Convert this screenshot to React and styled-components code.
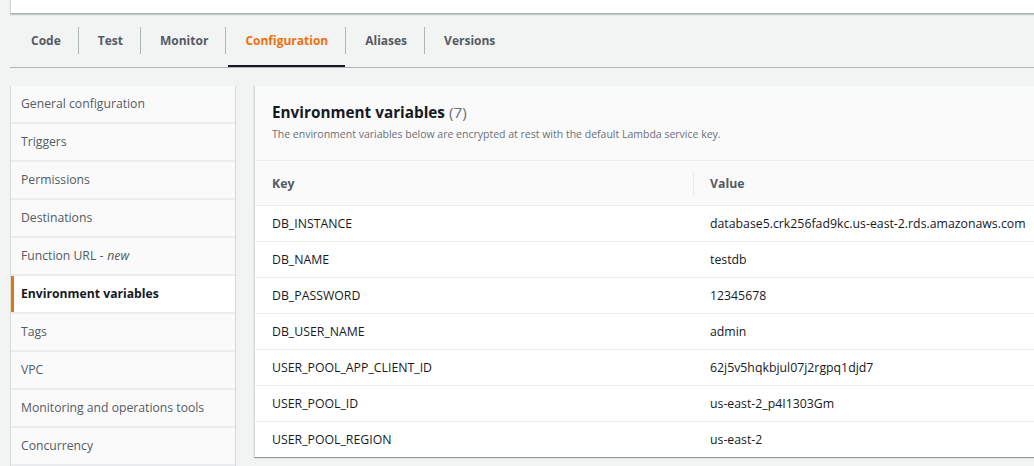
import React from "react";
import styled, { createGlobalStyle } from "styled-components";

const GlobalStyle = createGlobalStyle`
  body {
    margin: 0;
    background: #f2f3f3;
    font-family: "Open Sans", "Noto Sans", sans-serif;
    color: #16191f;
  }
`;

const Page = styled.div`
  width: 1034px;
  height: 466px;
  overflow: hidden;
  padding-left: 10px;
  box-sizing: border-box;
`;

const TopCard = styled.div`
  height: 13px;
  background: #fff;
  border-left: 1px solid #d5dbdb;
  border-bottom: 1px solid #aab7b8;
  box-shadow: 0 1px 1px rgba(0, 28, 36, 0.2);
`;

const TabBar = styled.div`
  display: flex;
  margin-top: 13px;
  height: 40px;
  border-bottom: 1px solid #aab7b8;
`;

const Tab = styled.div`
  position: relative;
  display: flex;
  align-items: flex-start;
  padding: 0 17px 0 ${(p) => (p.$first ? "21px" : "19px")};
  height: 40px;
  font-size: 12px;
  font-weight: 700;
  line-height: 27px;
  color: ${(p) => (p.$active ? "#ec7211" : "#545b64")};
  border-right: ${(p) => (p.$last ? "none" : "1px solid #aab7b8")};
  box-sizing: border-box;
  &::before {
    content: "";
    position: absolute;
    right: -1px;
    top: 27px;
    height: 13px;
    width: 1px;
    background: #f2f3f3;
    display: ${(p) => (p.$last ? "none" : "block")};
  }
  &::after {
    content: "";
    position: absolute;
    left: 2px;
    right: 0;
    bottom: 0;
    height: 2px;
    background: #16191f;
    display: ${(p) => (p.$active ? "block" : "none")};
  }
`;

const Body = styled.div`
  display: flex;
  gap: 18px;
  margin-top: 18px;
  align-items: flex-start;
`;

const SideNav = styled.div`
  width: 226px;
  flex-shrink: 0;
  display: flex;
  flex-direction: column;
  gap: 2px;
  padding-bottom: 2px;
  background: #eaeded;
  border-left: 1px solid #d5dbdb;
  border-right: 1px solid #d5dbdb;
  box-sizing: border-box;
`;

const NavItem = styled.div`
  height: 36px;
  display: flex;
  align-items: center;
  padding-left: ${(p) => (p.$active ? "7px" : "10px")};
  padding-bottom: 1px;
  box-sizing: border-box;
  font-size: 12.2px;
  background: ${(p) => (p.$active ? "#fff" : "#fafafa")};
  color: ${(p) => (p.$active ? "#16191f" : "#545b64")};
  font-weight: ${(p) => (p.$active ? 700 : 400)};
  border-left: ${(p) => (p.$active ? "3px solid #ec7211" : "none")};
  white-space: nowrap;
  em {
    margin-left: 4px;
  }
`;

const Panel = styled.div`
  flex: 1;
  min-width: 800px;
  background: #fff;
  border-left: 1px solid #d5dbdb;
  box-shadow: 0 1px 1px 0 rgba(0, 28, 36, 0.3), 1px 1px 1px 0 rgba(0, 28, 36, 0.15);
`;

const PanelHeader = styled.div`
  height: 75px;
  box-sizing: border-box;
  padding: 15px 0 0 17px;
  background: #fafafa;
  border-bottom: 1px solid #eaeded;
`;

const Title = styled.h2`
  margin: 0;
  font-size: 15.3px;
  line-height: 22px;
  font-weight: 700;
  color: #16191f;
  span {
    font-weight: 400;
    color: #687078;
  }
`;

const Desc = styled.p`
  margin: 3px 0 0;
  font-size: 10.5px;
  line-height: 16px;
  color: #687078;
`;

const Row = styled.div`
  display: grid;
  grid-template-columns: 438px 1fr;
  height: ${(p) => (p.$head ? "44px" : "35px")};
  align-items: center;
  background: ${(p) => (p.$head ? "#fafafa" : "#fff")};
  border-bottom: ${(p) => (p.$lastRow ? "none" : "1px solid #eaeded")};
  font-size: 12.3px;
  color: ${(p) => (p.$head ? "#545b64" : "#16191f")};
  font-weight: ${(p) => (p.$head ? 700 : 400)};
`;

const Cell = styled.div`
  padding-left: 17px;
  white-space: nowrap;
  height: 100%;
  display: flex;
  align-items: center;
  box-sizing: border-box;
`;

const HeadCell = styled(Cell)`
  position: relative;
  &::before {
    content: "";
    position: absolute;
    left: 0;
    top: 11px;
    bottom: 10px;
    width: 1px;
    background: #eaeded;
    display: ${(p) => (p.$sep ? "block" : "none")};
  }
`;

const tabs = ["Code", "Test", "Monitor", "Configuration", "Aliases", "Versions"];

const navItems = [
  "General configuration",
  "Triggers",
  "Permissions",
  "Destinations",
  "Function URL",
  "Environment variables",
  "Tags",
  "VPC",
  "Monitoring and operations tools",
  "Concurrency",
];

const vars = [
  ["DB_INSTANCE", "database5.crk256fad9kc.us-east-2.rds.amazonaws.com"],
  ["DB_NAME", "testdb"],
  ["DB_PASSWORD", "12345678"],
  ["DB_USER_NAME", "admin"],
  ["USER_POOL_APP_CLIENT_ID", "62j5v5hqkbjul07j2rgpq1djd7"],
  ["USER_POOL_ID", "us-east-2_p4I1303Gm"],
  ["USER_POOL_REGION", "us-east-2"],
];

export default function App() {
  return (
    <Page>
      <GlobalStyle />
      <TopCard />
      <TabBar>
        {tabs.map((t, i) => (
          <Tab
            key={t}
            $first={i === 0}
            $last={i === tabs.length - 1}
            $active={t === "Configuration"}
          >
            {t}
          </Tab>
        ))}
      </TabBar>
      <Body>
        <SideNav>
          {navItems.map((n) => (
            <NavItem key={n} $active={n === "Environment variables"}>
              {n === "Function URL" ? (
                <>
                  Function URL - <em>new</em>
                </>
              ) : (
                n
              )}
            </NavItem>
          ))}
        </SideNav>
        <Panel>
          <PanelHeader>
            <Title>
              Environment variables <span>(7)</span>
            </Title>
            <Desc>
              The environment variables below are encrypted at rest with the
              default Lambda service key.
            </Desc>
          </PanelHeader>
          <Row $head>
            <HeadCell>Key</HeadCell>
            <HeadCell $sep>Value</HeadCell>
          </Row>
          {vars.map(([k, v], i) => (
            <Row key={k} $lastRow={i === vars.length - 1}>
              <Cell>{k}</Cell>
              <Cell>{v}</Cell>
            </Row>
          ))}
        </Panel>
      </Body>
    </Page>
  );
}
